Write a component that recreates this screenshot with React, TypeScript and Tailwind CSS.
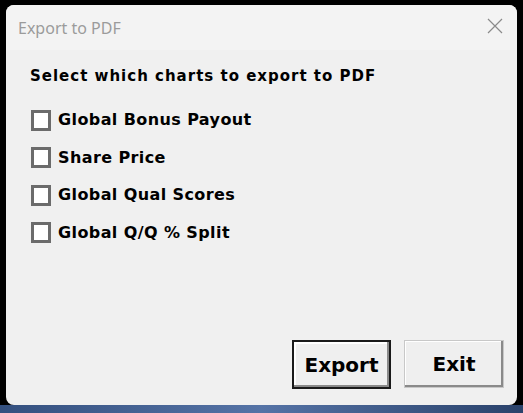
import React, { useState } from 'react';

const charts = ['Global Bonus Payout', 'Share Price', 'Global Qual Scores', 'Global Q/Q % Split'];

const ChartOption = ({ label }: { label: string }) => {
  const [checked, setChecked] = useState(false);
  return (
    <label className="flex items-center gap-[7px] h-[20px] cursor-default">
      <span
        onClick={() => setChecked(!checked)}
        className="w-[20px] h-[21px] bg-white border-[3px] border-[#6b6b6b] flex items-center justify-center text-[12px] leading-none"
      >
        {checked ? '✓' : ''}
      </span>
      <span className="text-[16px] leading-[20px] font-bold text-black tracking-[0.4px]">{label}</span>
    </label>
  );
};

const App = () => {
  return (
    <div className="w-[523px] h-[413px] bg-black flex flex-col overflow-hidden font-['DejaVu_Sans',sans-serif]">
      <div className="flex-1 pt-[5px] pl-[6px] pr-[6px]">
        <div className="h-[400px] bg-[#f0f0f0] rounded-[8px] flex flex-col overflow-hidden">
          <div className="h-[45px] bg-[#f3f3f3] flex items-center justify-between pl-[12px] pr-[14px]">
            <span className="text-[16px] text-[#9b9b9b] font-['Noto_Sans',sans-serif]">Export to PDF</span>
            <svg width="16" height="16" viewBox="0 0 16 16" className="mt-[-4px]">
              <path d="M1 1 L15 15 M15 1 L1 15" stroke="#8a8a8a" strokeWidth="1.2" />
            </svg>
          </div>
          <div className="flex-1 flex flex-col pl-[24px] pr-[12px]">
            <p className="mt-[17px] text-[15px] leading-[18px] font-bold text-black tracking-[1px]">
              Select which charts to export to PDF
            </p>
            <div className="mt-[25px] pl-[1px] flex flex-col gap-[17.5px]">
              {charts.map((c) => (
                <ChartOption key={c} label={c} />
              ))}
            </div>
            <div className="mt-auto mb-[16px] flex justify-end gap-[13px] pr-[1px]">
              <button className="w-[99px] h-[49px] bg-[#efefef] border-2 border-[#1a1a1a] shadow-[inset_-2px_-2px_0_#8a8a8a,inset_2px_2px_0_#ffffff] text-[20px] font-bold text-black">
                Export
              </button>
              <button className="w-[100px] h-[48px] bg-[#efefef] border border-[#c8c8c8] shadow-[inset_-2px_-2px_0_#8a8a8a,inset_1px_1px_0_#ffffff] text-[20px] font-bold text-black">
                Exit
              </button>
            </div>
          </div>
        </div>
      </div>
      <div className="h-[8px] bg-gradient-to-r from-[#34507f] via-[#5573a6] to-[#2a426b]" />
    </div>
  );
};

export default App;
